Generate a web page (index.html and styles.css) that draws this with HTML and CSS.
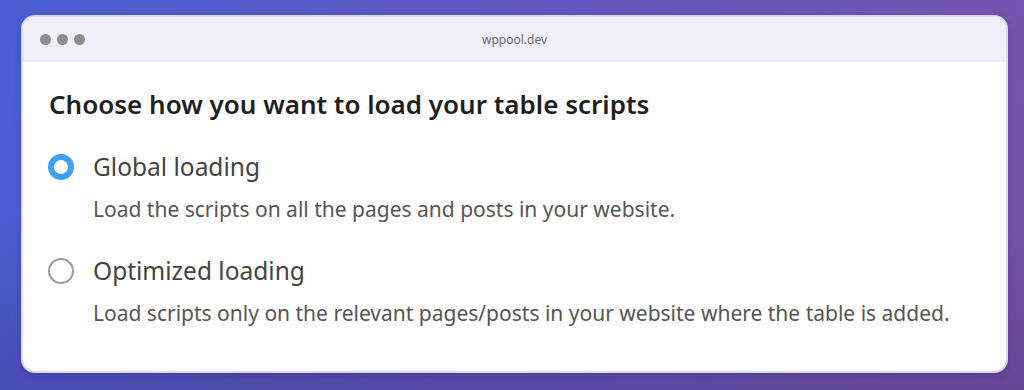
FILE: index.html
```html
<html lang="en">
<head>
  <meta charset="UTF-8" />
  <meta name="viewport" content="width=device-width, initial-scale=1.0"/>
  <title>Table scripts</title>
  <link rel="stylesheet" href="styles.css">
</head>
<body>
  <div class="window">
    <div class="titlebar">
      <div class="dots"><span></span><span></span><span></span></div>
      <div class="url">wppool.dev</div>
    </div>
    <div class="content">
      <h1>Choose how you want to load your table scripts</h1>

      <div class="option">
        <div class="row">
          <span class="radio checked"></span>
          <span class="label">Global loading</span>
        </div>
        <p class="desc">Load the scripts on all the pages and posts in your website.</p>
      </div>

      <div class="option">
        <div class="row">
          <span class="radio"></span>
          <span class="label">Optimized loading</span>
        </div>
        <p class="desc">Load scripts only on the relevant pages/posts in your website where the table is added.</p>
      </div>
    </div>
  </div>
</body>
</html>
```

FILE: styles.css
```css
* { box-sizing: border-box; }

body {
  margin: 0;
  height: 390px;
  overflow: hidden;
  background:
    linear-gradient(to bottom, rgba(40, 20, 80, 0) 55%, rgba(40, 20, 80, 0.22) 100%),
    linear-gradient(105deg, #4a5fd4 0%, #5f58c0 45%, #7854ab 100%);
  font-family: 'Noto Sans', 'Open Sans', sans-serif;
  padding: 15px 16px 0 21px;
}

.window {
  width: 987px;
  height: 358px;
  background: #fff;
  border: 2px solid #dcdae8;
  border-radius: 14px;
  overflow: hidden;
  box-shadow: 0 2px 6px rgba(40, 20, 90, 0.25);
}

.titlebar {
  height: 45px;
  background: #efeef9;
  display: flex;
  align-items: center;
  position: relative;
  padding-left: 17px;
}

.dots {
  display: flex;
  gap: 6px;
}

.dots span {
  width: 11px;
  height: 11px;
  border-radius: 50%;
  background: #8d8d8f;
}

.url {
  position: absolute;
  left: 0;
  right: 0;
  text-align: center;
  font-size: 12px;
  color: #6a6a6a;
}

.content {
  padding: 25px 26px 0 25px;
}

h1 {
  margin: 0 0 30px 1px;
  font-size: 26px;
  line-height: 34px;
  font-weight: 600;
  color: #1f1f1f;
}

.option {
  margin-bottom: 32px;
}

.row {
  display: flex;
  align-items: center;
  gap: 19px;
  height: 32px;
}

.radio {
  width: 26px;
  height: 26px;
  border-radius: 50%;
  border: 2px solid #9a9a9a;
  background: #fff;
  flex-shrink: 0;
}

.radio.checked {
  border: 6px solid #3da0f5;
}

.label {
  font-size: 24.5px;
  line-height: 32px;
  color: #444;
}

.desc {
  margin: 12px 0 0 45px;
  font-size: 21px;
  line-height: 28px;
  color: #555;
}
```
